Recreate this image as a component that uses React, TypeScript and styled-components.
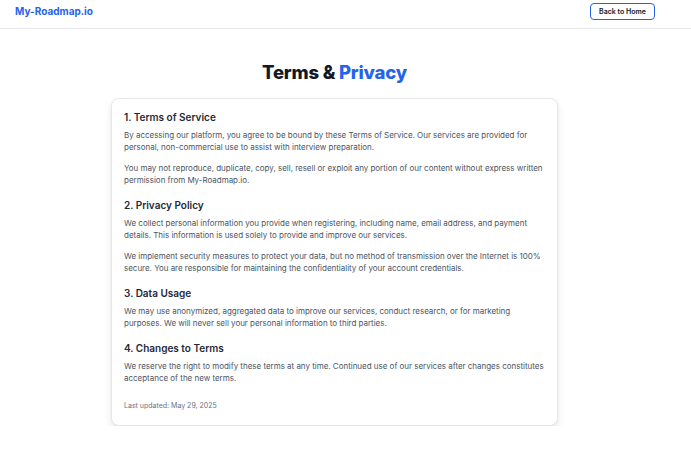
import React from "react";
import styled, { createGlobalStyle } from "styled-components";

const Global = createGlobalStyle`
  html, body { margin: 0; padding: 0; background: #ffffff; }
  body { font-family: Inter, "Noto Sans", sans-serif; -webkit-font-smoothing: antialiased; }
  * { box-sizing: border-box; }
`;

const Header = styled.header`
  height: 29px;
  display: flex;
  align-items: flex-start;
  justify-content: space-between;
  padding: 3px 36px 0 15px;
  border-bottom: 1px solid #e5e7eb;
`;

const Logo = styled.a`
  font-size: 10px;
  font-weight: 700;
  color: #2563eb;
  text-decoration: none;
  line-height: 17px;
`;

const HomeButton = styled.button`
  height: 17px;
  width: 65px;
  padding: 0;
  border: 1px solid #2563eb;
  border-radius: 4px;
  background: #fff;
  color: #111827;
  font-family: inherit;
  font-size: 7px;
  font-weight: 600;
  cursor: pointer;
`;

const Main = styled.main`
  display: flex;
  flex-direction: column;
  align-items: center;
  padding: 31px 22px 0 0;
`;

const Title = styled.h1`
  margin: 0 0 14px;
  font-size: 18.5px;
  font-weight: 800;
  color: #111827;
  line-height: 24px;
  letter-spacing: -0.2px;
`;

const Accent = styled.span`
  color: #2563eb;
`;

const Card = styled.section`
  width: 447px;
  background: #fff;
  border: 1px solid #e5e7eb;
  border-radius: 8px;
  box-shadow: 0 4px 8px rgba(0, 0, 0, 0.08), 0 1px 3px rgba(0, 0, 0, 0.05);
  padding: 11px 11px 14px 12px;
`;

const Section = styled.div`
  display: flex;
  flex-direction: column;
  gap: 9px;
  margin-bottom: 12px;
`;

const Heading = styled.h2`
  margin: 0 0 -4px;
  font-size: 10px;
  font-weight: 600;
  color: #1f2937;
  line-height: 14px;
`;

const Para = styled.p`
  margin: 0;
  font-size: 8px;
  line-height: 12px;
  color: #4b5563;
  letter-spacing: -0.02px;
`;

const Updated = styled.p`
  margin: 17px 0 0;
  font-size: 7px;
  color: #6b7280;
  line-height: 10px;
`;

const sections = [
  {
    title: "1. Terms of Service",
    paras: [
      "By accessing our platform, you agree to be bound by these Terms of Service. Our services are provided for personal, non-commercial use to assist with interview preparation.",
      "You may not reproduce, duplicate, copy, sell, resell or exploit any portion of our content without express written permission from My-Roadmap.io.",
    ],
  },
  {
    title: "2. Privacy Policy",
    paras: [
      "We collect personal information you provide when registering, including name, email address, and payment details. This information is used solely to provide and improve our services.",
      "We implement security measures to protect your data, but no method of transmission over the Internet is 100% secure. You are responsible for maintaining the confidentiality of your account credentials.",
    ],
  },
  {
    title: "3. Data Usage",
    paras: [
      "We may use anonymized, aggregated data to improve our services, conduct research, or for marketing purposes. We will never sell your personal information to third parties.",
    ],
  },
  {
    title: "4. Changes to Terms",
    paras: [
      "We reserve the right to modify these terms at any time. Continued use of our services after changes constitutes acceptance of the new terms.",
    ],
  },
];

export default function App() {
  return (
    <>
      <Global />
      <Header>
        <Logo href="#">My-Roadmap.io</Logo>
        <HomeButton>Back to Home</HomeButton>
      </Header>
      <Main>
        <Title>
          Terms &amp; <Accent>Privacy</Accent>
        </Title>
        <Card>
          {sections.map((s) => (
            <Section key={s.title}>
              <Heading>{s.title}</Heading>
              {s.paras.map((p, i) => (
                <Para key={i}>{p}</Para>
              ))}
            </Section>
          ))}
          <Updated>Last updated: May 29, 2025</Updated>
        </Card>
      </Main>
    </>
  );
}
